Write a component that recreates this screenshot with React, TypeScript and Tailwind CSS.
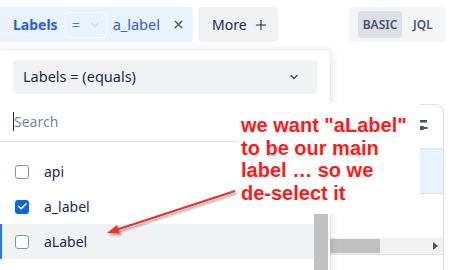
import React from "react";
import { ChevronDown, X, Plus, Check } from "lucide-react";

function Row({ label, checked, active }: { label: string; checked?: boolean; active?: boolean }) {
  return (
    <div
      className={
        active
          ? "flex h-[35px] items-center border-l-[2px] border-[#1d7afc] bg-[#f1f2f4] pl-[13px]"
          : "flex h-[35px] items-center pl-[15px]"
      }
    >
      {checked ? (
        <div className="flex h-[14px] w-[14px] items-center justify-center rounded-[3px] bg-[#0c66e4]">
          <Check size={11} strokeWidth={3.5} color="#ffffff" />
        </div>
      ) : (
        <div className="h-[14px] w-[14px] rounded-[3px] border-[1.5px] border-[#8590a2] bg-white" />
      )}
      {label ? <span className="ml-[15px] text-[14px] text-[#172b4d]">{label}</span> : null}
    </div>
  );
}

export default function App() {
  return (
    <div className="relative h-[270px] w-[462px] overflow-hidden bg-white font-['Noto_Sans',sans-serif]">
      {/* top bar */}
      <div className="flex h-[35px] items-center pt-0 mt-[7px]">
        <div className="flex h-[35px] w-[193px] items-center rounded-r-[4px] bg-[#e9f2ff] pl-[13px]">
          <span className="text-[14px] font-bold text-[#2f5fd8]">Labels</span>
          <div className="ml-[7px] flex h-[26px] w-[42px] items-center rounded-[4px] border border-white pl-[6px]">
            <span className="text-[14px] text-[#4a72e6]">=</span>
            <ChevronDown size={12} strokeWidth={3} color="#cddaf5" className="ml-[9px]" />
          </div>
          <span className="ml-[6px] text-[14.5px] text-[#2f5fd8]">a_label</span>
          <X size={13} strokeWidth={3} color="#505f79" className="ml-[12px]" />
        </div>
        <div className="ml-[5px] flex h-[35px] w-[80px] items-center rounded-[4px] bg-[#f1f2f4] pl-[14px]">
          <span className="text-[14px] text-[#172b4d]">More</span>
          <Plus size={16} strokeWidth={1.6} color="#172b4d" className="ml-[6px]" />
        </div>
        <div className="ml-auto mr-[16px] flex h-[35px] w-[97px] items-center rounded-[4px] bg-[#f4f5f7] pl-[9px]">
          <div className="flex h-[27px] w-[44px] items-center justify-center rounded-[3px] bg-[#dcdfe4]">
            <span className="text-[12px] font-semibold text-[#44546f]">BASIC</span>
          </div>
          <span className="ml-[11px] text-[12px] font-semibold text-[#44546f]">JQL</span>
        </div>
      </div>

      {/* table behind */}
      <div className="ml-[10px] mr-[18px] mt-[62px] h-[200px] rounded-t-[8px] border-r border-t border-[#dcdfe4]">
        <div className="relative h-[44px] border-b border-[#dcdfe4]">
          <svg className="absolute left-[409px] top-[14px]" width="10" height="14" viewBox="0 0 10 14">
            <rect x="1" y="1" width="7" height="2.5" fill="#44546f" />
            <circle cx="3" cy="9" r="2.3" fill="#44546f" />
            <rect x="3" y="8" width="5.5" height="2" fill="#44546f" />
          </svg>
        </div>
        <div className="h-[45px] border-b border-[#dcdfe4] bg-[#e9f2ff]" />
        <div className="h-[44px]" />
        <div className="relative flex h-[17px] items-center border-b border-[#dcdfe4] bg-[#f1f1f1]">
          <div className="ml-[320px] h-[14px] w-[50px] bg-[#c1c1c1]" />
          <svg className="absolute right-[5px] top-[4px]" width="5" height="8" viewBox="0 0 5 8">
            <polygon points="0,0 5,4 0,8" fill="#505050" />
          </svg>
        </div>
      </div>

      {/* dropdown */}
      <div className="absolute left-0 top-[50px] h-[240px] w-[330px] rounded-tr-[4px] bg-white shadow-[0_2px_10px_rgba(9,30,66,0.18),0_0_1px_rgba(9,30,66,0.3)]">
        <div className="mx-[13px] mt-[10px] flex h-[34px] items-center justify-between rounded-[4px] bg-[#f1f2f4] pl-[10px] pr-[17px]">
          <span className="text-[14.5px] text-[#172b4d]">Labels = (equals)</span>
          <ChevronDown size={12} strokeWidth={3} color="#44546f" />
        </div>
        <div className="flex h-[48px] items-center border-b border-[#dcdfe4] pl-[13px] pt-[8px]">
          <div className="h-[19px] w-[1px] bg-[#172b4d]" />
          <span className="text-[14px] text-[#7a869a]">Search</span>
        </div>
        <div className="relative pt-[12px]">
          <div className="w-[314px]">
            <Row label="api" />
            <Row label="a_label" checked />
            <Row label="aLabel" active />
            <Row label="" />
          </div>
        </div>
        <div className="absolute right-[2px] top-[164px] h-[80px] w-[14px] bg-[#c1c1c1]" />
      </div>

      {/* annotation */}
      <div className="absolute left-[238px] top-[103px] h-[111px] w-[182px] bg-white pl-[3px] pt-[11px] font-['Liberation_Sans',Arial,sans-serif] text-[20px] font-bold leading-[22.5px] text-[#ff1a1a]">
        we want "aLabel"
        <br />
        to be our main
        <br />
        label … so we
        <br />
        de-select it
      </div>

      {/* arrow */}
      <svg className="absolute left-0 top-0" width="462" height="270" viewBox="0 0 462 270">
        <defs>
          <filter id="sh" x="-20%" y="-20%" width="140%" height="140%">
            <feDropShadow dx="2" dy="2" stdDeviation="1.2" floodColor="#000" floodOpacity="0.35" />
          </filter>
        </defs>
        <g filter="url(#sh)">
          <line x1="235" y1="191" x2="118" y2="229.3" stroke="#e8302a" strokeWidth="2" />
          <polygon points="107,233 119.8,233.5 117,225" fill="#e8302a" />
        </g>
      </svg>
    </div>
  );
}
